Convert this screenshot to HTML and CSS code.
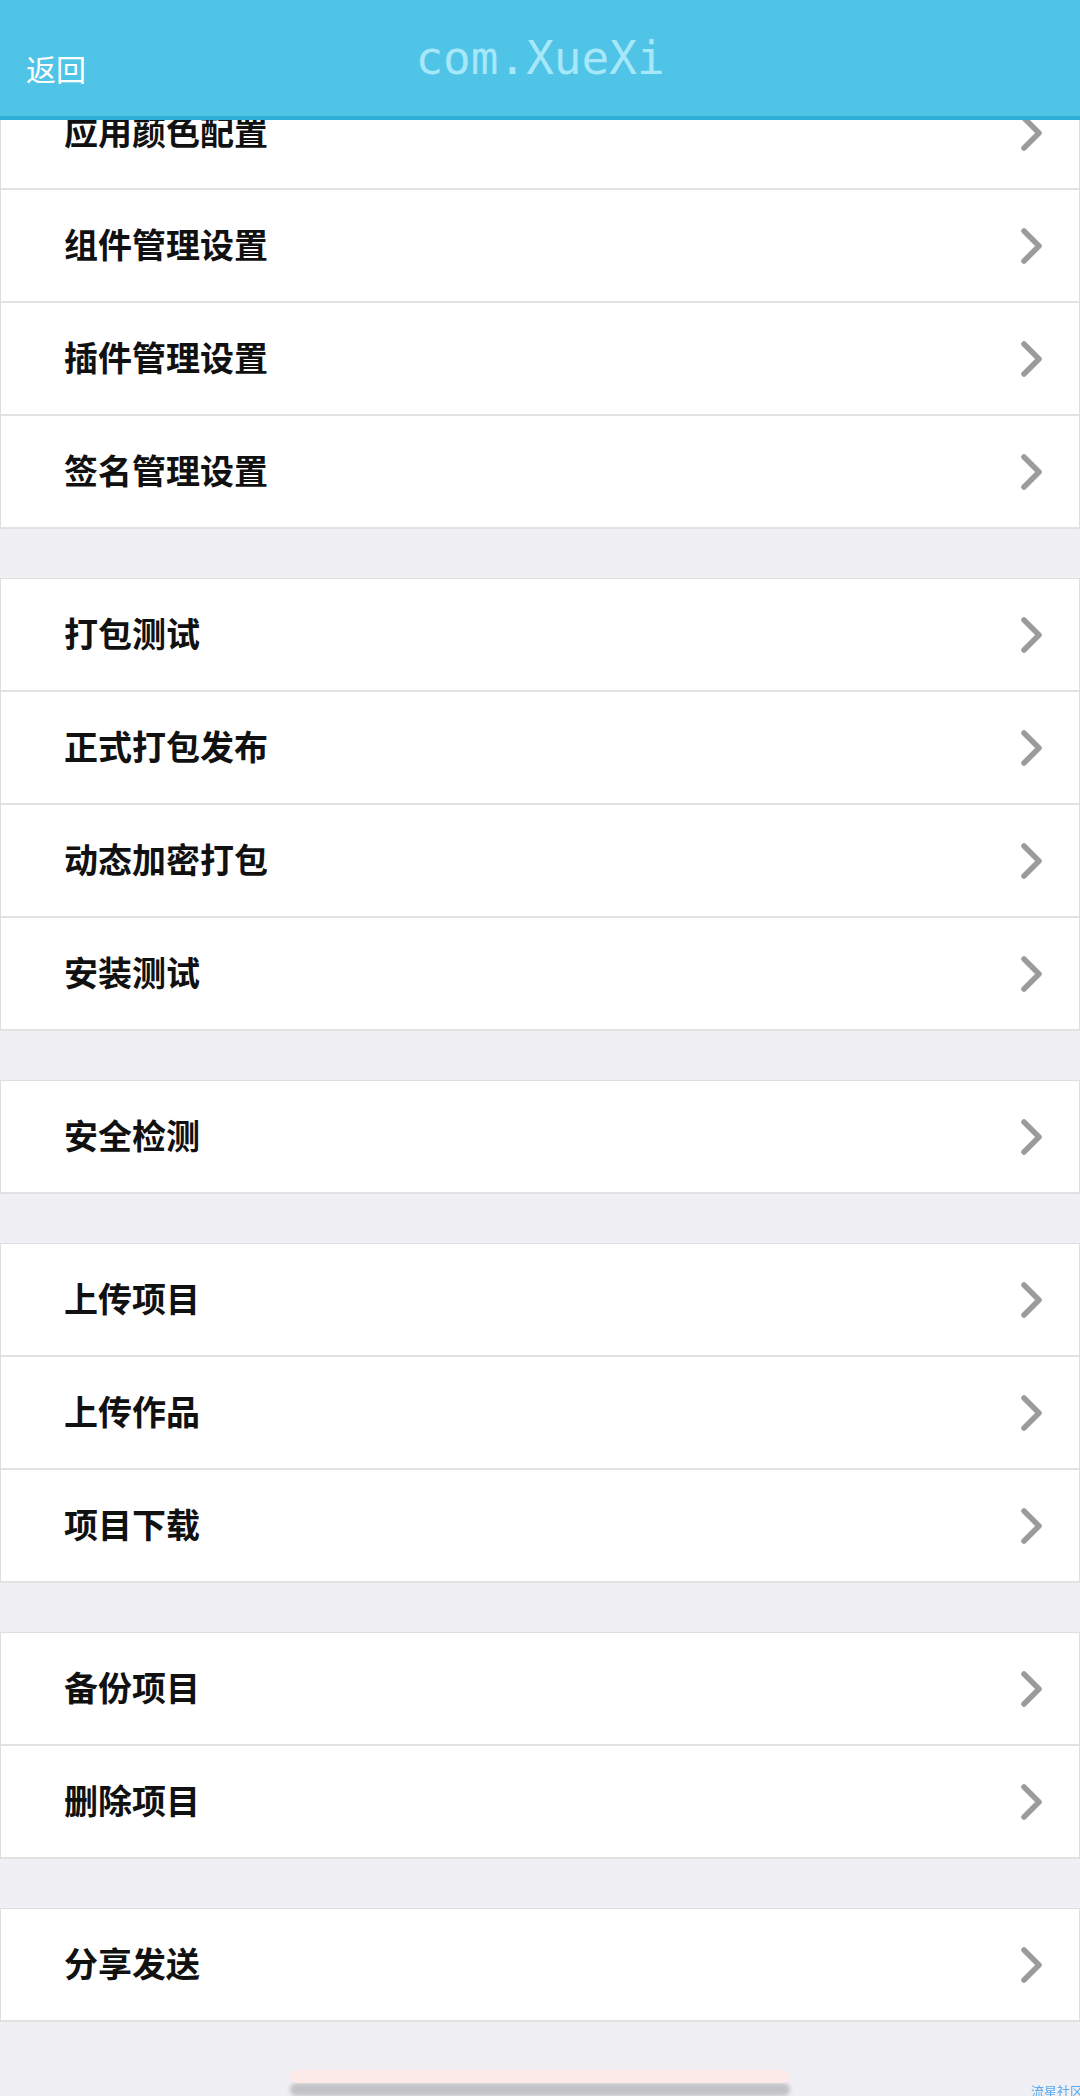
FILE: index.html
```html
<!DOCTYPE html>
<html lang="zh-CN">

<head>
    <meta charset="utf-8">
    <meta name="viewport" content="width=device-width, initial-scale=1.0">
    <title>com.XueXi</title>
    <link rel="stylesheet" href="styles.css">
</head>

<body>
    <!-- 顶部标题栏 -->
    <div id="header">
        <span class="back-btn">返回</span>
        <span class="title">com.XueXi</span>
        <span></span>
    </div>

    <div id="content">

        <div class="group">
            <div class="row"><span class="row-text">应用颜色配置</span><svg class="arrow" viewBox="0 0 24 40"><polyline points="4,5 19,20 4,35"/></svg></div>
            <div class="row"><span class="row-text">组件管理设置</span><svg class="arrow" viewBox="0 0 24 40"><polyline points="4,5 19,20 4,35"/></svg></div>
            <div class="row"><span class="row-text">插件管理设置</span><svg class="arrow" viewBox="0 0 24 40"><polyline points="4,5 19,20 4,35"/></svg></div>
            <div class="row"><span class="row-text">签名管理设置</span><svg class="arrow" viewBox="0 0 24 40"><polyline points="4,5 19,20 4,35"/></svg></div>
        </div>

        <div class="group">
            <div class="row"><span class="row-text">打包测试</span><svg class="arrow" viewBox="0 0 24 40"><polyline points="4,5 19,20 4,35"/></svg></div>
            <div class="row"><span class="row-text">正式打包发布</span><svg class="arrow" viewBox="0 0 24 40"><polyline points="4,5 19,20 4,35"/></svg></div>
            <div class="row"><span class="row-text">动态加密打包</span><svg class="arrow" viewBox="0 0 24 40"><polyline points="4,5 19,20 4,35"/></svg></div>
            <div class="row"><span class="row-text">安装测试</span><svg class="arrow" viewBox="0 0 24 40"><polyline points="4,5 19,20 4,35"/></svg></div>
        </div>

        <div class="group">
            <div class="row"><span class="row-text">安全检测</span><svg class="arrow" viewBox="0 0 24 40"><polyline points="4,5 19,20 4,35"/></svg></div>
        </div>

        <div class="group">
            <div class="row"><span class="row-text">上传项目</span><svg class="arrow" viewBox="0 0 24 40"><polyline points="4,5 19,20 4,35"/></svg></div>
            <div class="row"><span class="row-text">上传作品</span><svg class="arrow" viewBox="0 0 24 40"><polyline points="4,5 19,20 4,35"/></svg></div>
            <div class="row"><span class="row-text">项目下载</span><svg class="arrow" viewBox="0 0 24 40"><polyline points="4,5 19,20 4,35"/></svg></div>
        </div>

        <div class="group">
            <div class="row"><span class="row-text">备份项目</span><svg class="arrow" viewBox="0 0 24 40"><polyline points="4,5 19,20 4,35"/></svg></div>
            <div class="row"><span class="row-text">删除项目</span><svg class="arrow" viewBox="0 0 24 40"><polyline points="4,5 19,20 4,35"/></svg></div>
        </div>

        <div class="group">
            <div class="row"><span class="row-text">分享发送</span><svg class="arrow" viewBox="0 0 24 40"><polyline points="4,5 19,20 4,35"/></svg></div>
        </div>

        <!-- 底部提示条 -->
        <div class="bottom-bar"></div>
    </div>

    <span class="watermark">流星社区</span>
</body>

</html>
```

FILE: styles.css
```css
/* 页面基础样式 */
body {
    margin: 0;
    background-color: #efeff4;
    font-family: "Noto Sans CJK SC", "Noto Sans", sans-serif;
    height: 2096px;
    overflow: hidden;
}

/* 顶部标题栏，固定在最上层 */
#header {
    position: fixed;
    top: 0;
    left: 0;
    right: 0;
    z-index: 10;
    height: 116px;
    background-color: #50c4e6;
    border-bottom: 4px solid #2cb0d8;
    display: grid;
    grid-template-columns: 1fr auto 1fr;
    align-items: center;
}

.back-btn {
    color: #ffffff;
    font-size: 30px;
    padding-left: 26px;
    margin-top: 20px;
}

.title {
    color: #a6e7f9;
    font-family: "DejaVu Sans Mono", monospace;
    font-size: 46px;
    line-height: 1;
}

/* 列表区域（已向下滚动一部分） */
#content {
    padding-top: 76px;
}

.group {
    background-color: #ffffff;
    border: 1px solid #dedede;
    border-bottom: none;
    margin-bottom: 49px;
}

.row {
    height: 111px;
    border-bottom: 2px solid #e2e2e2;
    display: flex;
    align-items: center;
    justify-content: space-between;
    padding: 0 35px 0 63px;
}

.row-text {
    font-size: 34px;
    font-weight: bold;
    color: #111111;
    margin-bottom: 4px;
}

/* 右侧箭头 */
.arrow {
    width: 24px;
    height: 40px;
}

.arrow polyline {
    fill: none;
    stroke: #9b9b9b;
    stroke-width: 5.5;
    stroke-linecap: round;
    stroke-linejoin: round;
}

/* 底部浮动条 */
.bottom-bar {
    width: 500px;
    height: 13px;
    margin: -1px auto 0;
    background-color: #fdebe9;
    border-radius: 6px;
    box-shadow: 0 13px 4px 0 rgba(0, 0, 0, 0.19);
}

/* 右下角水印 */
.watermark {
    position: fixed;
    right: -3px;
    bottom: -4px;
    font-size: 13px;
    color: #5aa9f0;
}
```
